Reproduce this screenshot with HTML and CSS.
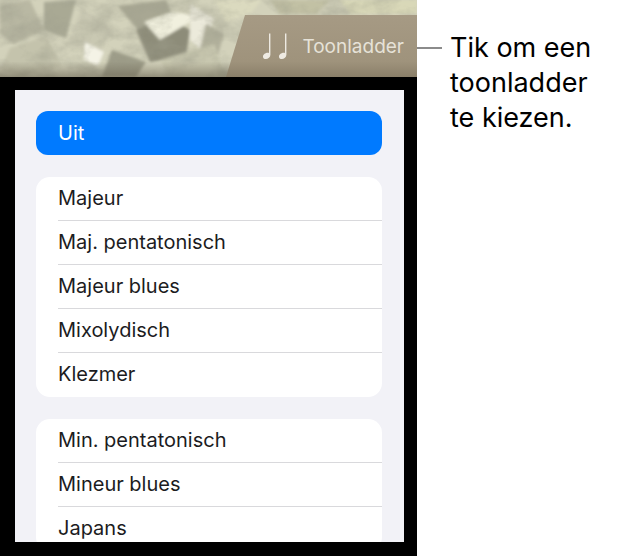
FILE: index.html
```html
<!DOCTYPE html>
<html lang="nl">
<head>
    <meta charset="UTF-8">
    <meta name="viewport" content="width=device-width, initial-scale=1.0">
    <title>Toonladder</title>
    <link rel="stylesheet" href="styles.css">
</head>
<body>
    <div class="page">
        <div class="device">
            <div class="top">
                <svg class="pearl" viewBox="0 0 417 77" preserveAspectRatio="none">
                    <defs>
                        <filter id="soft"><feGaussianBlur stdDeviation="1.6"/></filter>
                        <filter id="grain" x="0" y="0" width="100%" height="100%">
                            <feTurbulence type="fractalNoise" baseFrequency="0.035 0.05" numOctaves="4" seed="11"/>
                            <feColorMatrix values="0 0 0 0 0.35  0 0 0 0 0.35  0 0 0 0 0.27  1.6 0 0 0 -0.62"/>
                        </filter>
                        <linearGradient id="fade" x1="0" y1="0" x2="0" y2="1">
                            <stop offset="0.8" stop-color="#6b6553" stop-opacity="0"/>
                            <stop offset="1" stop-color="#6b6553" stop-opacity="0.6"/>
                        </linearGradient>
                    </defs>
                    <rect width="417" height="77" fill="#d3d2bb"/>
                    <g filter="url(#soft)">
                        <polygon points="0,5 30,0 44,30 14,44 0,34" fill="#b9b8a3"/>
                        <polygon points="44,2 76,0 66,38 44,30" fill="#a9a994"/>
                        <polygon points="10,48 46,36 62,66 20,76 0,70" fill="#c4c3ac"/>
                        <polygon points="82,8 112,30 96,60 68,42" fill="#c9c8b2"/>
                        <polygon points="85,42 104,52 98,66 84,60" fill="#f4f3e6"/>
                        <polygon points="118,6 166,0 176,24 138,30" fill="#a8a793"/>
                        <polygon points="136,30 166,16 190,30 186,56 150,62" fill="#8d8c79"/>
                        <polygon points="144,22 172,12 200,16 160,40" fill="#f1f0de"/>
                        <polygon points="190,4 214,18 204,52 190,40" fill="#eceadb"/>
                        <polygon points="214,0 262,0 250,14 226,22" fill="#dbdabf"/>
                        <polygon points="206,24 224,34 216,62 198,58" fill="#b2b19c"/>
                        <polygon points="112,50 146,62 136,77 102,77" fill="#9c9b87"/>
                        <polygon points="160,60 214,44 226,77 170,77" fill="#c8c7af"/>
                        <polygon points="270,0 330,0 316,14 280,14" fill="#c2c1a4"/>
                        <polygon points="340,0 417,0 417,14 350,14" fill="#d9d8b8"/>
                    </g>
                    <rect width="417" height="77" filter="url(#grain)" opacity="0.7"/>
                    <rect width="417" height="77" fill="url(#fade)"/>
                </svg>
                <div class="tab">
                    <svg class="notes" viewBox="0 0 28 28">
                        <path d="M7 1.5h1.4v21.2c0 2.6-2.2 4.3-4.6 4.3-1.7 0-2.8-.9-2.8-2.300 0-2.300 2.500-3.900 4.700-3.900.5 0 .9 0 1.300.2z"/>
                        <path d="M23 1.500h1.400v21.200c0 2.600-2.200 4.300-4.600 4.300-1.700 0-2.800-.9-2.800-2.300 0-2.300 2.500-3.900 4.700-3.900.5 0 .9 0 1.300.2z"/>
                    </svg>
                    <span class="tab-label">Toonladder</span>
                </div>
            </div>
            <div class="panel">
                <div class="option-off">Uit</div>
                <ul class="group">
                    <li>Majeur</li>
                    <li>Maj. pentatonisch</li>
                    <li>Majeur blues</li>
                    <li>Mixolydisch</li>
                    <li>Klezmer</li>
                </ul>
                <ul class="group">
                    <li>Min. pentatonisch</li>
                    <li>Mineur blues</li>
                    <li>Japans</li>
                </ul>
            </div>
        </div>
        <div class="callout">
            <span class="callout-line"></span>
            <p class="callout-text">Tik om een toonladder te kiezen.</p>
        </div>
    </div>
</body>
</html>
```

FILE: styles.css
```css
html, body {
    margin: 0;
    height: 100%;
    background: #fff;
    overflow: hidden;
}
.page {
    display: flex;
    height: 556px;
    font-family: 'Inter', 'Liberation Sans', sans-serif;
}
.device {
    width: 417px;
    flex: none;
    display: flex;
    flex-direction: column;
    background: #000;
}
.top {
    position: relative;
    height: 77px;
    flex: none;
    background: #d3d2bb;
    overflow: hidden;
}
.pearl {
    display: block;
    width: 417px;
    height: 77px;
}
.tab {
    position: absolute;
    left: 226px;
    right: 0;
    top: 15px;
    bottom: 0;
    display: flex;
    align-items: center;
    justify-content: flex-end;
    gap: 12px;
    padding-right: 13px;
    box-sizing: border-box;
    background: linear-gradient(180deg, #a69a84, #9f937c 75%, #8a7f69);
    clip-path: polygon(19px 0, 100% 0, 100% 100%, 0 100%);
}
.notes {
    width: 28px;
    height: 28px;
    fill: #eeeae2;
}
.tab-label {
    font-size: 19px;
    color: #e6e2d8;
}
.panel {
    flex: 1;
    margin: 13px 13px 14px 15px;
    padding: 21px 22px 0 21px;
    background: #f2f2f7;
    overflow: hidden;
    display: flex;
    flex-direction: column;
    gap: 22px;
}
.option-off {
    flex: none;
    height: 44px;
    line-height: 44px;
    padding-left: 22px;
    border-radius: 12px;
    background: #007aff;
    color: #fff;
    font-size: 20px;
}
.group {
    flex: none;
    list-style: none;
    margin: 0;
    padding: 0 0 0 22px;
    background: #fff;
    border-radius: 14px;
}
.group li {
    height: 44px;
    line-height: 43px;
    box-sizing: border-box;
    border-bottom: 1px solid #d9d9dc;
    color: #1c1c1e;
    font-size: 20px;
}
.group li:last-child {
    border-bottom: none;
}
.callout {
    display: flex;
    align-items: flex-start;
    gap: 8px;
    padding-top: 30px;
}
.callout-line {
    flex: none;
    width: 25px;
    height: 2px;
    margin-top: 17px;
    background: #8b8b8b;
}
.callout-text {
    margin: 0;
    width: 160px;
    color: #000;
    font-size: 27px;
    line-height: 35px;
}
```
